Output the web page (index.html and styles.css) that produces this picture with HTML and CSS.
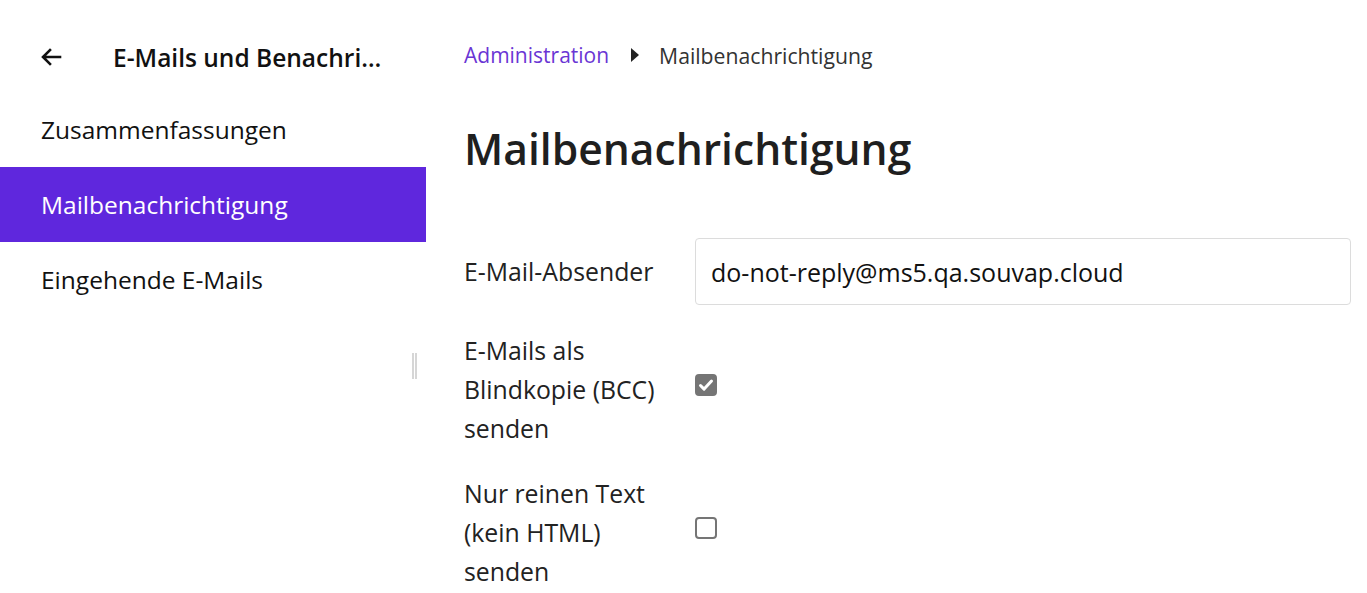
FILE: index.html
```html
<!DOCTYPE html>
<html lang="de">
<head>
<meta charset="utf-8">
<title>Mailbenachrichtigung</title>
<link rel="stylesheet" href="styles.css">
</head>
<body>
<div class="app">
  <aside class="sidebar">
    <div class="side-head">
      <span class="back">
        <svg width="24" height="24" viewBox="0 0 24 24"><path d="M21 12H5M11 5l-7 7 7 7" fill="none" stroke="#111" stroke-width="2.6" stroke-linecap="square"/></svg>
      </span>
      <span class="side-title">E-Mails und Benachrichtigungen</span>
    </div>
    <nav class="side-nav">
      <a class="nav-item">Zusammenfassungen</a>
      <a class="nav-item active">Mailbenachrichtigung</a>
      <a class="nav-item">Eingehende E-Mails</a>
    </nav>
    <div class="resizer"></div>
  </aside>
  <main class="content">
    <div class="crumbs">
      <a class="crumb-link">Administration</a>
      <svg class="crumb-sep" width="10" height="14" viewBox="0 0 10 14"><path d="M1 0l8 7-8 7z" fill="#222"/></svg>
      <span class="crumb-current">Mailbenachrichtigung</span>
    </div>
    <h1 class="title">Mailbenachrichtigung</h1>
    <form class="form">
      <label class="f-label f-label-single">E-Mail-Absender</label>
      <div class="f-field"><input class="text-input" type="text" value="do-not-reply@ms5.qa.souvap.cloud"></div>
      <label class="f-label">E-Mails als<br>Blindkopie (BCC)<br>senden</label>
      <div class="f-field f-check"><span class="cb checked"><svg width="16" height="14" viewBox="0 0 16 14"><path d="M2.5 7.5l3.6 3.6L13.5 3" fill="none" stroke="#fff" stroke-width="3" stroke-linecap="round" stroke-linejoin="round"/></svg></span></div>
      <label class="f-label">Nur reinen Text<br>(kein HTML)<br>senden</label>
      <div class="f-field f-check"><span class="cb"></span></div>
    </form>
  </main>
</div>
</body>
</html>
```
FILE: styles.css
```css
* { box-sizing: border-box; }
html, body { margin: 0; padding: 0; background: #fff; }
body {
  font-family: "Open Sans", "Noto Sans", sans-serif;
  color: #1b1b1b;
  overflow: hidden;
  height: 593px;
}
.app { display: flex; height: 593px; }
.sidebar {
  width: 426px;
  flex: none;
  position: relative;
  display: flex;
  flex-direction: column;
}
.side-head {
  display: flex;
  align-items: center;
  height: 92px;
  padding: 22px 41px 0 39px;
}
.back { width: 24px; height: 24px; display: flex; margin-right: 50px; flex: none; }
.side-title {
  font-weight: 600;
  font-size: 24.5px;
  white-space: nowrap;
  overflow: hidden;
  text-overflow: ellipsis;
  color: #111;
}
.side-nav { display: flex; flex-direction: column; }
.nav-item {
  height: 75px;
  display: flex;
  align-items: center;
  padding-left: 41px;
  font-size: 24.5px;
  color: #111;
}
.nav-item.active { background: #5f27dd; color: #fff; }
.resizer {
  position: absolute;
  left: 412px;
  top: 353px;
  width: 5px;
  height: 26px;
  border-left: 2px solid #d6d6d6;
  border-right: 2px solid #d6d6d6;
}
.content { flex: 1; padding-left: 38px; padding-right: 16px; }
.crumbs {
  display: flex;
  align-items: center;
  height: 32px;
  margin-top: 39px;
  font-size: 21px;
}
.crumb-link { color: #6a35d4; }
.crumb-sep { margin: 0 19px 0 21px; }
.crumb-current { color: #333; font-size: 21.2px; }
.title {
  font-size: 42.6px;
  font-weight: 600;
  margin: 47px 0 0;
  line-height: 60px;
  color: #1f1f1f;
}
.form {
  display: grid;
  grid-template-columns: 231px 1fr;
  row-gap: 26px;
  margin-top: 60px;
  align-items: center;
}
.f-label { font-size: 24.8px; line-height: 39px; color: #222; white-space: nowrap; }
.text-input {
  width: 100%;
  height: 67px;
  border: 1px solid #dcdcdc;
  border-radius: 4px;
  padding: 0 15px;
  font-family: "Open Sans", "Noto Sans", sans-serif;
  font-size: 25px;
  color: #111;
}
.f-check { display: flex; align-items: center; padding-bottom: 10px; }
.cb {
  width: 22px;
  height: 22px;
  border: 2px solid #757575;
  border-radius: 4px;
  display: flex;
  align-items: center;
  justify-content: center;
}
.cb.checked { background: #757575; }
```
